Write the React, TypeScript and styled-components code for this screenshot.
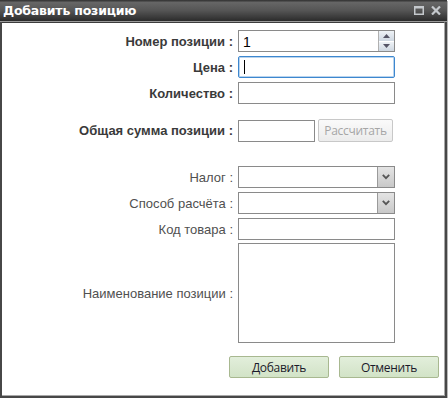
import React from 'react';
import styled, { createGlobalStyle } from 'styled-components';

const GlobalStyle = createGlobalStyle`
  html, body {
    margin: 0;
    padding: 0;
    background: #ffffff;
  }
  * { box-sizing: border-box; }
`;

const App: React.FC = () => {
  return (
    <>
      <GlobalStyle />
      <Window>
        <TitleBar>
          <Title>Добавить позицию</Title>
          <TitleIcons>
            <svg width="10" height="9" viewBox="0 0 10 9">
              <rect x="0.75" y="0.75" width="8.5" height="7.5" fill="none" stroke="#c4c8cc" strokeWidth="1.5" />
              <rect x="0" y="0" width="10" height="2.5" fill="#c4c8cc" />
            </svg>
            <svg width="10" height="9" viewBox="0 0 10 9">
              <path d="M1 0.5 L9 8.5 M9 0.5 L1 8.5" stroke="#c4c8cc" strokeWidth="2.2" />
            </svg>
          </TitleIcons>
        </TitleBar>
        <Body>
          <Row>
            <Label $bold>Номер позиции :</Label>
            <Spinner>
              <SpinValue>1</SpinValue>
              <SpinButtons>
                <SpinButton>
                  <svg width="7" height="4" viewBox="0 0 7 4"><path d="M0 4 L3.5 0 L7 4 Z" fill="#556" /></svg>
                </SpinButton>
                <SpinButton>
                  <svg width="7" height="4" viewBox="0 0 7 4"><path d="M0 0 L3.5 4 L7 0 Z" fill="#556" /></svg>
                </SpinButton>
              </SpinButtons>
            </Spinner>
          </Row>
          <Row $top={4}>
            <Label $bold>Цена :</Label>
            <Field $focused>
              <Caret />
            </Field>
          </Row>
          <Row $top={4}>
            <Label $bold>Количество :</Label>
            <Field />
          </Row>
          <Row $top={15}>
            <Label $bold>Общая сумма позиции :</Label>
            <Inline>
              <Field $width={77} />
              <CalcButton>Рассчитать</CalcButton>
            </Inline>
          </Row>
          <Row $top={24}>
            <Label>Налог :</Label>
            <Select>
              <SelectArrow>
                <svg width="8" height="6" viewBox="0 0 8 6"><path d="M0.8 0.8 L4 4.2 L7.2 0.8" fill="none" stroke="#555" strokeWidth="1.8" /></svg>
              </SelectArrow>
            </Select>
          </Row>
          <Row $top={4}>
            <Label>Способ расчёта :</Label>
            <Select>
              <SelectArrow>
                <svg width="8" height="6" viewBox="0 0 8 6"><path d="M0.8 0.8 L4 4.2 L7.2 0.8" fill="none" stroke="#555" strokeWidth="1.8" /></svg>
              </SelectArrow>
            </Select>
          </Row>
          <Row $top={4}>
            <Label>Код товара :</Label>
            <Field />
          </Row>
          <Row $top={3}>
            <Label>Наименование позиции :</Label>
            <Field $height={100} />
          </Row>
          <Actions>
            <ActionButton>Добавить</ActionButton>
            <ActionButton>Отменить</ActionButton>
          </Actions>
        </Body>
      </Window>
    </>
  );
};

export default App;

const Window = styled.div`
  width: 447px;
  height: 398px;
  display: flex;
  flex-direction: column;
  border: 2px solid #474747;
  border-top: none;
  box-shadow: 1px 1px 0 #b8b8b8;
  background: #ffffff;
`;

const TitleBar = styled.div`
  height: 22px;
  margin: 0 -2px;
  display: flex;
  align-items: center;
  justify-content: space-between;
  padding: 0 6px 1px 3px;
  background: linear-gradient(#2e2e2e 0%, #666666 12%, #555555 50%, #383838 85%, #2a2a2a 100%);
  border-bottom: 1px solid #9a9a9a;
`;

const Title = styled.div`
  color: #ffffff;
  font-family: "DejaVu Sans", Verdana, sans-serif;
  font-weight: bold;
  font-size: 12.5px;
  letter-spacing: -0.2px;
`;

const TitleIcons = styled.div`
  display: flex;
  gap: 7px;
  align-items: center;
  padding-top: 1px;
`;

const Body = styled.div`
  flex: 1;
  display: flex;
  flex-direction: column;
  padding: 7px 0 0 1px;
  border-top: 1px solid #3c3c3c;
  border-right: 1px solid #a8a8a8;
  border-bottom: 1px solid #a8a8a8;
`;

const Row = styled.div<{ $top?: number }>`
  display: grid;
  grid-template-columns: 230px auto;
  column-gap: 5px;
  align-items: center;
  margin-top: ${p => p.$top ?? 0}px;
`;

const Label = styled.div<{ $bold?: boolean }>`
  text-align: right;
  font-family: "Liberation Sans", Arial, sans-serif;
  font-size: 13px;
  font-weight: ${p => (p.$bold ? 'bold' : 'normal')};
  color: ${p => (p.$bold ? '#3a3a3a' : '#505050')};
  white-space: nowrap;
`;

const Field = styled.div<{ $width?: number; $height?: number; $focused?: boolean }>`
  width: ${p => p.$width ?? 157}px;
  height: ${p => p.$height ?? 22}px;
  border: 1px solid ${p => (p.$focused ? '#3d87cf' : '#8a8a8a')};
  border-radius: ${p => (p.$focused ? '2px' : '0')};
  box-shadow: ${p => (p.$focused ? 'inset 0 0 0 1px #b9d4ee' : 'none')};
  background: #ffffff;
  display: flex;
  align-items: center;
  padding-left: 5px;
`;

const Caret = styled.div`
  width: 1px;
  height: 14px;
  background: #000000;
`;

const Spinner = styled.div`
  width: 157px;
  height: 22px;
  border: 1px solid #8a8a8a;
  display: flex;
  align-items: stretch;
`;

const SpinValue = styled.div`
  flex: 1;
  font-family: "Liberation Sans", Arial, sans-serif;
  font-size: 14px;
  color: #000;
  padding: 1px 0 0 4px;
  display: flex;
  align-items: center;
`;

const SpinButtons = styled.div`
  width: 16px;
  display: flex;
  flex-direction: column;
  gap: 1px;
  background: #ffffff;
  border-left: 1px solid #b0b0b0;
`;

const SpinButton = styled.div`
  flex: 1;
  display: flex;
  align-items: center;
  justify-content: center;
  background: linear-gradient(#eef2f6, #cfd8e2);
`;

const Inline = styled.div`
  display: flex;
  align-items: center;
  gap: 3px;
`;

const CalcButton = styled.div`
  width: 75px;
  height: 23px;
  border: 1px solid #c8c8c8;
  border-radius: 2px;
  background: linear-gradient(#fafafa, #ececec);
  color: #a6a6a6;
  font-family: "Open Sans", sans-serif;
  font-size: 12px;
  letter-spacing: -0.3px;
  display: flex;
  align-items: center;
  justify-content: center;
`;

const Select = styled.div`
  width: 157px;
  height: 22px;
  border: 1px solid #8a8a8a;
  display: flex;
  justify-content: flex-end;
  background: #ffffff;
`;

const SelectArrow = styled.div`
  width: 17px;
  border-left: 1px solid #9a9a9a;
  background: linear-gradient(#e4e4e4, #c8c8c8);
  display: flex;
  align-items: center;
  justify-content: center;
`;

const Actions = styled.div`
  display: flex;
  justify-content: flex-end;
  gap: 10px;
  margin-top: 13px;
  padding-right: 5px;
`;

const ActionButton = styled.div`
  width: 100px;
  height: 22px;
  border: 1px solid #a8b890;
  border-radius: 2px;
  background: linear-gradient(#e2eedb, #d2e3c7);
  color: #1a1a2a;
  font-family: "Open Sans", sans-serif;
  font-size: 12px;
  letter-spacing: -0.3px;
  display: flex;
  align-items: center;
  justify-content: center;
`;
